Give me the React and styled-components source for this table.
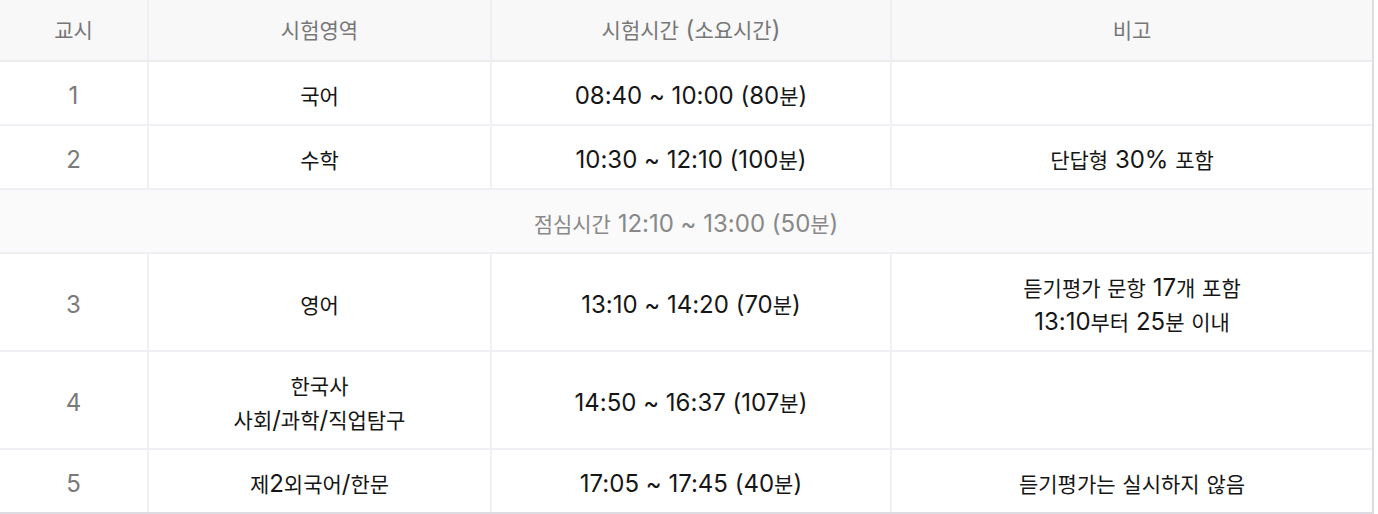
import React from "react";
import styled, { createGlobalStyle } from "styled-components";

const GlobalStyle = createGlobalStyle`
  html, body {
    margin: 0;
    padding: 0;
    background: #ffffff;
  }
  body {
    font-family: Inter, "Noto Sans CJK KR", sans-serif;
  }
`;

const Wrapper = styled.div`
  width: 1374px;
  border-right: 2px solid #dcdce2;
  border-bottom: 2px solid #dcdce2;
  box-sizing: border-box;
`;

const Table = styled.table`
  width: 100%;
  border-collapse: collapse;
  table-layout: fixed;
  font-size: 24px;
`;

// Hangul runs sit a little smaller than the Latin digits around them
const Hangul = styled.span`
  font-family: "Noto Sans CJK KR", sans-serif;
  font-size: 0.875em;
  line-height: 1;
`;

const HeadCell = styled.th`
  height: 60px;
  padding: 0;
  font-weight: 400;
  line-height: 34px;
  color: #777777;
  background: #f8f8f8;
  border-bottom: 2px solid #ececee;
  border-left: 2px solid #f0f0f4;
  text-align: center;

  &:first-child {
    border-left: none;
  }
`;

const Cell = styled.td`
  padding: 17px 0 11px;
  line-height: 34px;
  text-align: center;
  color: ${(p) => (p.$muted ? "#7a7a7a" : "#161616")};
  border-top: 2px solid #f0f0f4;
  border-left: 2px solid #f0f0f4;

  &:first-child {
    border-left: none;
  }
`;

const BreakCell = styled.td`
  padding: 17px 0 11px;
  line-height: 34px;
  text-align: center;
  color: #888888;
  background: #fafafb;
  border-top: 2px solid #f0f0f4;
`;

const rows = [
  { no: "1", subject: ["국어"], time: "08:40 ~ 10:00 (80분)", note: [] },
  { no: "2", subject: ["수학"], time: "10:30 ~ 12:10 (100분)", note: ["단답형 30% 포함"] },
  { lunch: "점심시간 12:10 ~ 13:00 (50분)" },
  {
    no: "3",
    subject: ["영어"],
    time: "13:10 ~ 14:20 (70분)",
    note: ["듣기평가 문항 17개 포함", "13:10부터 25분 이내"],
  },
  {
    no: "4",
    subject: ["한국사", "사회/과학/직업탐구"],
    time: "14:50 ~ 16:37 (107분)",
    note: [],
  },
  { no: "5", subject: ["제2외국어/한문"], time: "17:05 ~ 17:45 (40분)", note: ["듣기평가는 실시하지 않음"] },
];

const Text = ({ children }) =>
  children
    .split(/([\uAC00-\uD7A3]+)/)
    .filter(Boolean)
    .map((part, i) =>
      /[\uAC00-\uD7A3]/.test(part) ? <Hangul key={i}>{part}</Hangul> : part
    );

const Lines = ({ items }) =>
  items.map((line, i) => (
    <React.Fragment key={i}>
      {i > 0 && <br />}
      <Text>{line}</Text>
    </React.Fragment>
  ));

export default function App() {
  return (
    <>
      <GlobalStyle />
      <Wrapper>
        <Table>
          <colgroup>
            <col style={{ width: 148 }} />
            <col style={{ width: 343 }} />
            <col style={{ width: 400 }} />
            <col />
          </colgroup>
          <thead>
            <tr>
              <HeadCell><Text>교시</Text></HeadCell>
              <HeadCell><Text>시험영역</Text></HeadCell>
              <HeadCell><Text>시험시간 (소요시간)</Text></HeadCell>
              <HeadCell><Text>비고</Text></HeadCell>
            </tr>
          </thead>
          <tbody>
            {rows.map((row, i) =>
              row.lunch ? (
                <tr key={i}>
                  <BreakCell colSpan={4}><Text>{row.lunch}</Text></BreakCell>
                </tr>
              ) : (
                <tr key={i}>
                  <Cell $muted>{row.no}</Cell>
                  <Cell>
                    <Lines items={row.subject} />
                  </Cell>
                  <Cell><Text>{row.time}</Text></Cell>
                  <Cell>
                    <Lines items={row.note} />
                  </Cell>
                </tr>
              )
            )}
          </tbody>
        </Table>
      </Wrapper>
    </>
  );
}
